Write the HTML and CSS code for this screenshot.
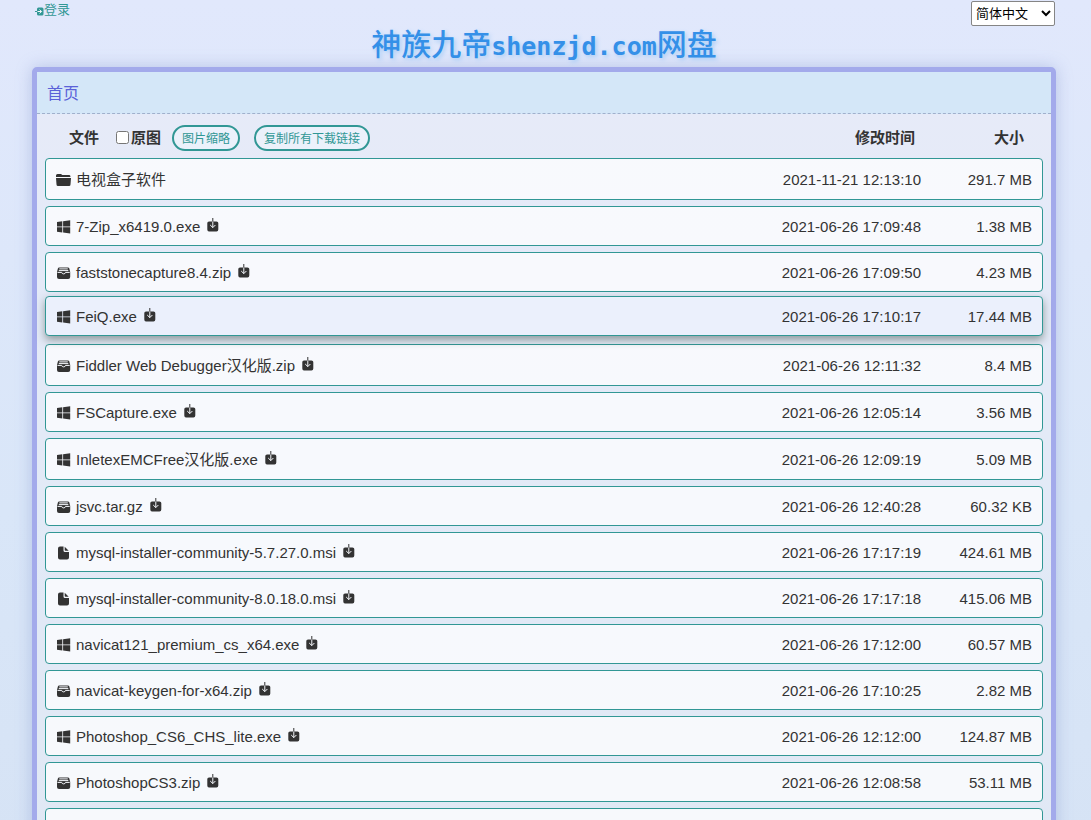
FILE: index.html
```html
<!DOCTYPE html>
<html lang="zh-CN">
<head>
<meta charset="utf-8">
<title>神族九帝shenzjd.com网盘</title>
<link rel="stylesheet" href="styles.css">
</head>
<body>
<svg class="sprite" aria-hidden="true">
  <symbol id="folder" viewBox="0 0 15 12"><path d="M0 3V1.500Q0 0 1.500 0h3.500l1.300 1h7q1.200 0 1.200 2zM0 4h15l-.5 6.500q0 1.500-1.500 1.500H2Q.5 12 .5 10.500z"/></symbol>
  <symbol id="windows" viewBox="0 0 14 14"><path d="M.5 2.100l5.300-.8v5.200H.5zM6.600 1.200L13.700.2v6.300H6.600zM.5 7.300h5.300v5.200L.5 11.700zM6.600 7.300h7.100v6.300l-7.100-1z"/></symbol>
  <symbol id="archive" viewBox="0 0 14 14"><path d="M2.800 1.500h8.500q1.300 0 1.600 1.200l.8 3.300v5q0 2-2 2H2.500q-2 0-2-2V6l.8-3.300Q1.600 1.500 2.800 1.500z"/><path class="cut" d="M2.800 2.900h8.500M2.300 4.600h9.500M1 6.400h4.200q.3 1.500 1.900 1.500T9 6.400h4.200"/></symbol>
  <symbol id="file" viewBox="0 0 14 14"><path d="M3.500.5H7v4q0 1.500 1.500 1.500h4v5.500q0 2-2 2h-7q-2 0-2-2v-9q0-2 2-2zM8.200.8l4 4H9q-.8 0-.8-.8z"/></symbol>
  <symbol id="download" viewBox="0 0 12 14"><path d="M2 3.500h7.500q1.800 0 1.800 1.500v6.500q0 2-1.800 2H2Q.3 13.500.3 11.500V5Q.3 3.500 2 3.500zM5.300 0h1v3.500h-1z"/><path class="cut" d="M5.800 3.500v6M3.200 7l2.600 2.600L8.400 7"/></symbol>
  <symbol id="login" viewBox="0 0 9 9"><path d="M3.500.5H7q1.500 0 1.500 1.500v5Q8.500 8.500 7 8.500H3.500Q2 8.500 2 7V2Q2 .5 3.500.5zM0 4h2v1H0z"/><path class="cut" d="M2.500 4.500h4M4.600 2.500l2 2-2 2"/></symbol>
</svg>
<header class="topbar">
  <a class="login" href="#"><svg class="login-icon"><use href="#login"/></svg>登录</a>
  <select class="language" aria-label="语言"><option>简体中文</option></select>
</header>
<h1 class="title">神族九帝<span class="latin">shenzjd.com</span>网盘</h1>
<main class="panel">
  <nav class="crumbs"><a href="#">首页</a></nav>
  <div class="body">
    <table class="files">
      <thead>
        <tr class="head">
          <th class="name"><div class="tools"><span>文件</span><label class="original"><input type="checkbox">原图</label><button class="pill">图片缩略</button><button class="pill">复制所有下载链接</button></div></th>
          <th class="time">修改时间</th><th class="size">大小</th>
        </tr>
      </thead>
      <tbody>
        <tr class="row tall"><td class="name"><svg class="icon folder"><use href="#folder"/></svg><a href="#">电视盒子软件</a></td><td class="time">2021-11-21 12:13:10</td><td class="size">291.7 MB</td></tr>
        <tr class="row"><td class="name"><svg class="icon"><use href="#windows"/></svg><a href="#">7-Zip_x6419.0.exe</a><a class="get" href="#" aria-label="下载"><svg class="down"><use href="#download"/></svg></a></td><td class="time">2021-06-26 17:09:48</td><td class="size">1.38 MB</td></tr>
        <tr class="row"><td class="name"><svg class="icon"><use href="#archive"/></svg><a href="#">faststonecapture8.4.zip</a><a class="get" href="#" aria-label="下载"><svg class="down"><use href="#download"/></svg></a></td><td class="time">2021-06-26 17:09:50</td><td class="size">4.23 MB</td></tr>
        <tr class="row active"><td class="name"><svg class="icon"><use href="#windows"/></svg><a href="#">FeiQ.exe</a><a class="get" href="#" aria-label="下载"><svg class="down"><use href="#download"/></svg></a></td><td class="time">2021-06-26 17:10:17</td><td class="size">17.44 MB</td></tr>
        <tr class="row tall"><td class="name"><svg class="icon"><use href="#archive"/></svg><a href="#">Fiddler Web Debugger汉化版.zip</a><a class="get" href="#" aria-label="下载"><svg class="down"><use href="#download"/></svg></a></td><td class="time">2021-06-26 12:11:32</td><td class="size">8.4 MB</td></tr>
        <tr class="row"><td class="name"><svg class="icon"><use href="#windows"/></svg><a href="#">FSCapture.exe</a><a class="get" href="#" aria-label="下载"><svg class="down"><use href="#download"/></svg></a></td><td class="time">2021-06-26 12:05:14</td><td class="size">3.56 MB</td></tr>
        <tr class="row tall"><td class="name"><svg class="icon"><use href="#windows"/></svg><a href="#">InletexEMCFree汉化版.exe</a><a class="get" href="#" aria-label="下载"><svg class="down"><use href="#download"/></svg></a></td><td class="time">2021-06-26 12:09:19</td><td class="size">5.09 MB</td></tr>
        <tr class="row"><td class="name"><svg class="icon"><use href="#archive"/></svg><a href="#">jsvc.tar.gz</a><a class="get" href="#" aria-label="下载"><svg class="down"><use href="#download"/></svg></a></td><td class="time">2021-06-26 12:40:28</td><td class="size">60.32 KB</td></tr>
        <tr class="row"><td class="name"><svg class="icon"><use href="#file"/></svg><a href="#">mysql-installer-community-5.7.27.0.msi</a><a class="get" href="#" aria-label="下载"><svg class="down"><use href="#download"/></svg></a></td><td class="time">2021-06-26 17:17:19</td><td class="size">424.61 MB</td></tr>
        <tr class="row"><td class="name"><svg class="icon"><use href="#file"/></svg><a href="#">mysql-installer-community-8.0.18.0.msi</a><a class="get" href="#" aria-label="下载"><svg class="down"><use href="#download"/></svg></a></td><td class="time">2021-06-26 17:17:18</td><td class="size">415.06 MB</td></tr>
        <tr class="row"><td class="name"><svg class="icon"><use href="#windows"/></svg><a href="#">navicat121_premium_cs_x64.exe</a><a class="get" href="#" aria-label="下载"><svg class="down"><use href="#download"/></svg></a></td><td class="time">2021-06-26 17:12:00</td><td class="size">60.57 MB</td></tr>
        <tr class="row"><td class="name"><svg class="icon"><use href="#archive"/></svg><a href="#">navicat-keygen-for-x64.zip</a><a class="get" href="#" aria-label="下载"><svg class="down"><use href="#download"/></svg></a></td><td class="time">2021-06-26 17:10:25</td><td class="size">2.82 MB</td></tr>
        <tr class="row"><td class="name"><svg class="icon"><use href="#windows"/></svg><a href="#">Photoshop_CS6_CHS_lite.exe</a><a class="get" href="#" aria-label="下载"><svg class="down"><use href="#download"/></svg></a></td><td class="time">2021-06-26 12:12:00</td><td class="size">124.87 MB</td></tr>
        <tr class="row"><td class="name"><svg class="icon"><use href="#archive"/></svg><a href="#">PhotoshopCS3.zip</a><a class="get" href="#" aria-label="下载"><svg class="down"><use href="#download"/></svg></a></td><td class="time">2021-06-26 12:08:58</td><td class="size">53.11 MB</td></tr>
        <tr class="row"><td class="name"></td><td class="time"></td><td class="size"></td></tr>
      </tbody>
    </table>
  </div>
</main>
</body>
</html>
```
FILE: styles.css
```css
* { box-sizing: border-box; }
html { background: #d6e3f5; }
body {
  margin: 0;
  min-height: 100vh;
  font: 15px/20px "Liberation Sans", Arial, "Noto Sans CJK SC", sans-serif;
  color: #333;
  background: linear-gradient(#e1e8fc, #d9e6f8 60%, #d6e3f5);
}
a { color: inherit; text-decoration: none; }
.sprite { position: absolute; width: 0; height: 0; }
svg { fill: currentColor; flex: none; }
.cut { fill: none; stroke: #f7f9fd; stroke-width: 1; }
.topbar {
  display: flex;
  justify-content: space-between;
  align-items: flex-start;
  height: 28px;
  padding: 1px 36px 0 35px;
}
.login { display: flex; align-items: center; font-size: 13px; line-height: 18px; color: #319795; }
.login-icon { width: 9px; height: 9px; margin-top: 2px; }
.language {
  width: 84px;
  height: 25px;
  padding: 0;
  font: 13px "Liberation Sans", "Noto Sans CJK SC", sans-serif;
  color: #000;
  background: #fff;
  border: 1px solid #858585;
  border-radius: 2px;
}
.title {
  height: 39px;
  margin: 0;
  padding-right: 3px;
  text-align: center;
  font: 500 30px/28px "Noto Sans CJK SC", sans-serif;
  color: #3490e8;
  text-shadow: 2px 2px 4px #a9cdf5;
}
.latin { font: bold 25px/28px "DejaVu Sans Mono", monospace; }
.panel {
  margin: 0 35px 0 32px;
  border: 5px solid #a3aaeb;
  border-radius: 5px;
  background: rgba(240, 240, 245, .4);
  box-shadow: 0 0 16px rgba(120, 140, 200, .4);
}
.crumbs {
  height: 42px;
  padding: 1px 10px 0;
  font-size: 16px;
  line-height: 42px;
  color: #5a62d8;
  background: #d4e7f8;
  border-bottom: 1px dashed #a0b0cc;
}
.body { padding: 0 8px; }
.files { display: flex; flex-direction: column; gap: 6px; }
.files thead { display: block; }
.files tbody { display: flex; flex-direction: column; gap: 6px; }
.head, .row { display: flex; align-items: center; }
.files th, .files td { padding: 0; }
.name { flex: 1; display: flex; align-items: center; }
.time { width: 150px; text-align: right; }
.size { width: 111px; text-align: right; }
.head { height: 38px; padding: 9px 19px 0 24px; }
.head .size { width: 109px; }
.tools { display: flex; align-items: center; }
.original { display: flex; align-items: center; gap: 2px; margin: 0 11px 0 17px; }
.original input { width: 13px; height: 13px; margin: 0; }
.pill {
  height: 26px;
  margin-right: 14px;
  padding: 0 8px 1px;
  font: 12px "Liberation Sans", "Noto Sans CJK SC", sans-serif;
  color: #319795;
  background: #ebf1fb;
  border: 2px solid #319795;
  border-radius: 13px;
}
.row {
  height: 40px;
  padding: 2px 10px 0;
  background: rgba(255, 255, 255, .72);
  border: 1px solid #319795;
  border-radius: 4px;
}
.tall { height: 42px; }
.active {
  transform: translateY(-2px);
  background: #ebf0fc;
  box-shadow: 0 4px 8px rgba(60, 80, 70, .5);
}
.icon { width: 15px; height: 14px; margin-right: 5px; }
.folder { height: 12px; }
.get { margin-left: 7px; }
.down { display: block; width: 12px; height: 14px; margin-bottom: 4px; }
```
